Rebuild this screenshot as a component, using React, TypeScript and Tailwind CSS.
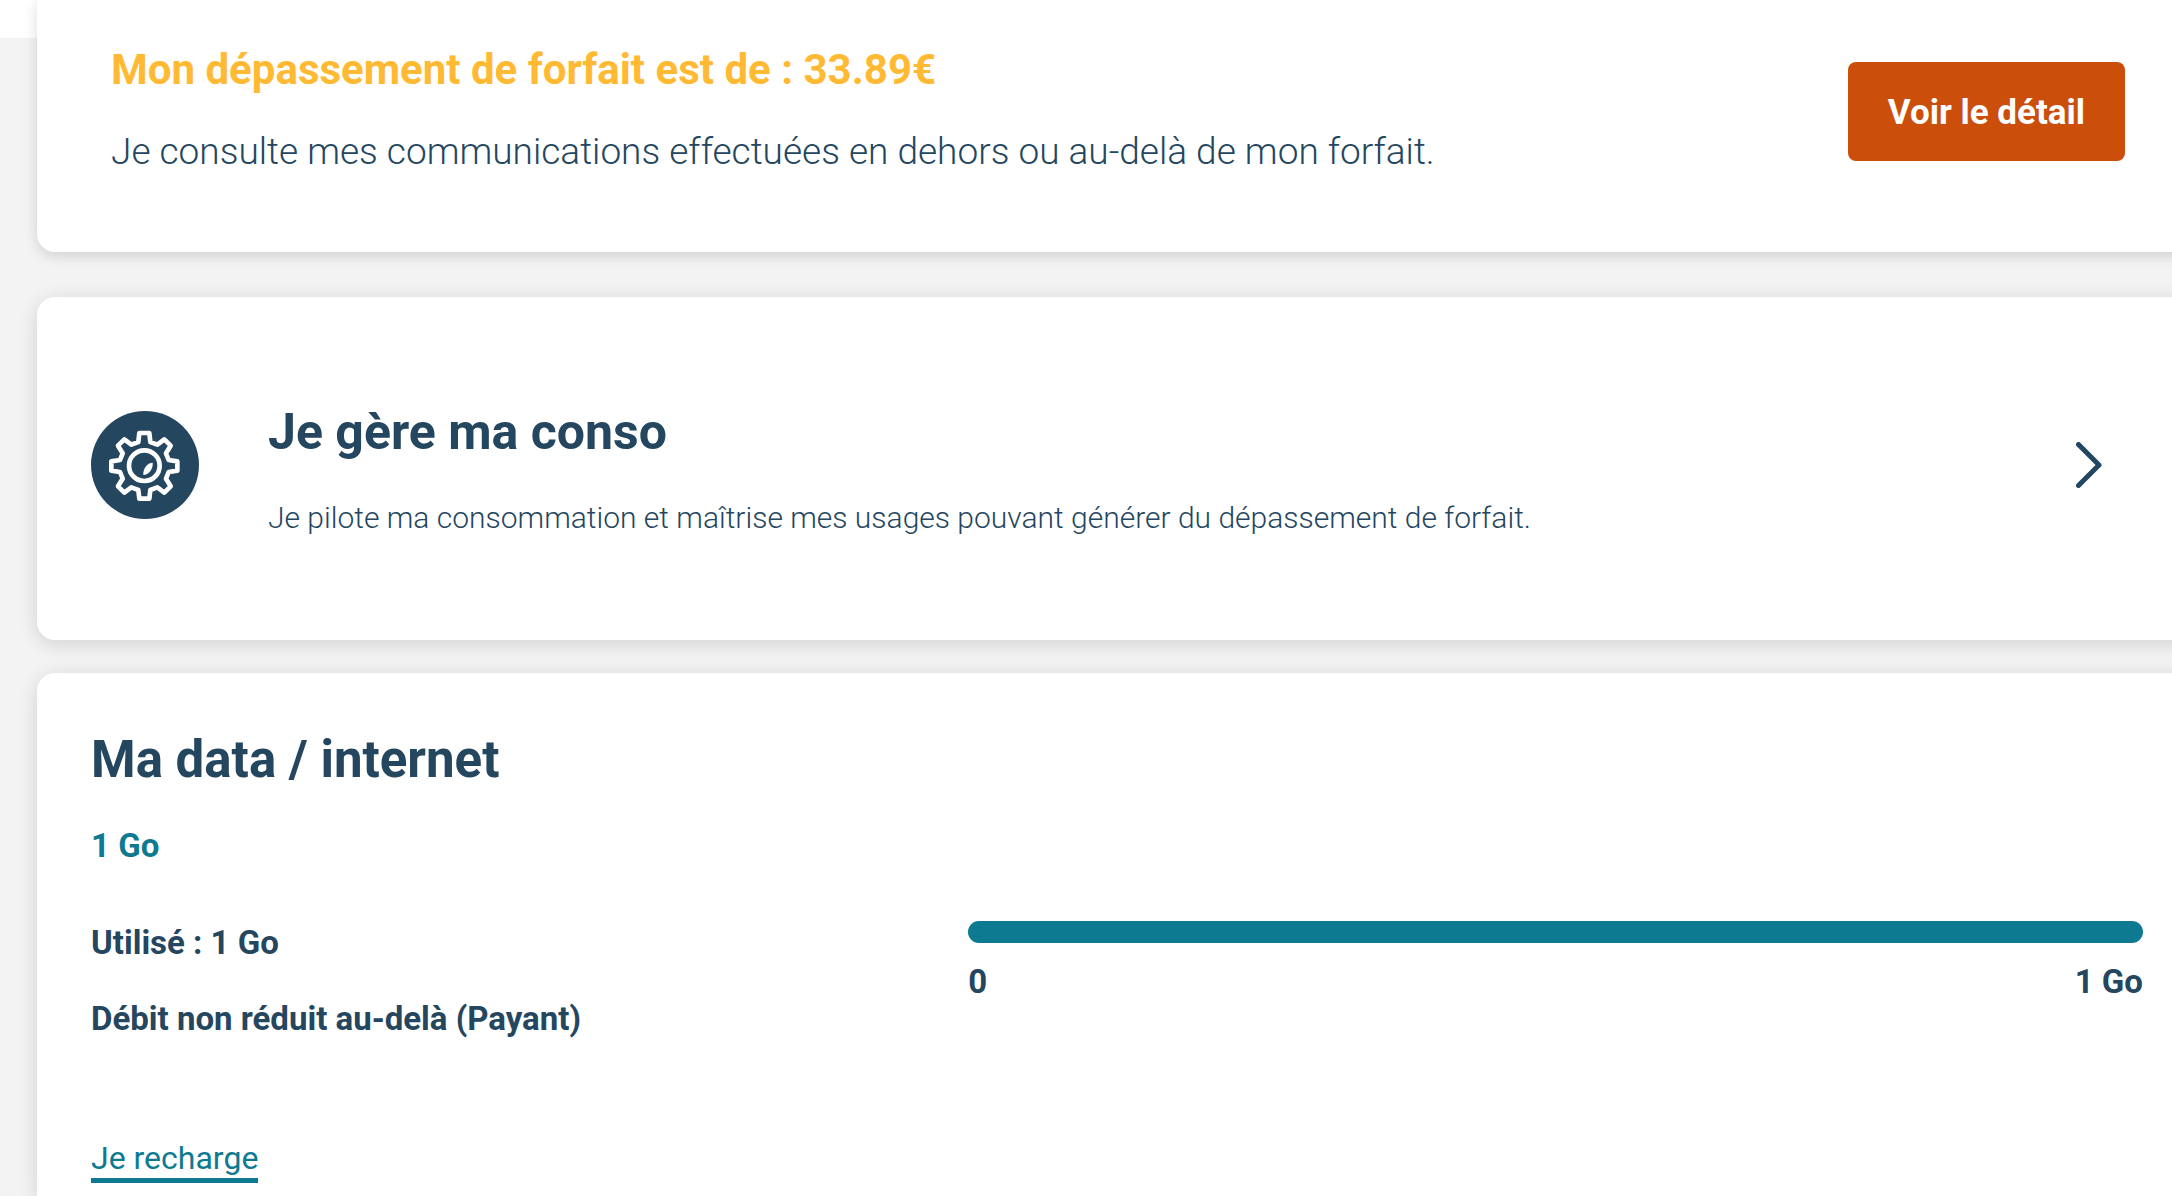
import React from 'react';

interface CardProps {
  className?: string;
  children: React.ReactNode;
}

const Card: React.FC<CardProps> = ({ className = '', children }) => (
  <section className={`bg-white ${className}`}>{children}</section>
);

const GearIcon = () => (
  <svg viewBox="0 0 324 324" className="w-[108px] h-[108px] shrink-0" fill="none" aria-hidden="true">
    <circle cx="162" cy="162" r="162" fill="#25465f" />
    <g transform="translate(-63 -63)" stroke="#fff" strokeWidth="14" strokeLinejoin="round">
      <path d="M208 129H238L241 156L262 164L283 148L302 167L288 190L296 210L322 214V242L296 246L288 266L302 289L283 308L262 292L241 300L238 326H208L205 300L184 292L163 308L144 289L158 266L150 246L124 242V214L150 210L158 190L144 167L163 148L184 164L205 156Z" />
      <circle cx="223" cy="227" r="46" />
      <path d="M248 218C232 218 218 236 220 255C236 255 250 236 248 218Z" fill="#fff" stroke="none" />
    </g>
  </svg>
);

const ChevronIcon = () => (
  <svg viewBox="0 0 26 46" className="w-[26px] h-[46px]" fill="none" aria-hidden="true">
    <path d="M2.5 2.5L23 23L2.5 43.5" stroke="#25465f" strokeWidth="5" strokeLinecap="round" strokeLinejoin="round" />
  </svg>
);

const OverageCard = () => (
  <Card className="flex items-start justify-between pt-11 pb-[74px] pl-[74px] pr-[71px] rounded-bl-[18px] shadow-[0_4px_14px_rgba(0,0,0,0.14)]">
    <div>
      <h2 className="text-[42px] leading-[52px] font-bold text-[#ffb932]">
        Mon dépassement de forfait est de : 33.89€
      </h2>
      <p className="mt-[30px] text-[37px] leading-[52px] font-light">
        Je consulte mes communications effectuées en dehors ou au-delà de mon forfait.
      </p>
    </div>
    <button className="mt-[18px] h-[99px] px-10 pt-0.5 rounded-lg bg-[#cc4e0b] text-white text-[35px] leading-[44px] font-bold">
      Voir le détail
    </button>
  </Card>
);

const ManageCard = () => (
  <Card className="mt-[45px] flex items-center h-[343px] pb-[7px] pl-[54px] pr-[94px] rounded-l-[18px] shadow-[0_4px_20px_rgba(0,0,0,0.14)]">
    <GearIcon />
    <div className="flex-1 ml-[69px] pt-3">
      <h2 className="text-[50px] leading-[60px] font-bold">Je gère ma conso</h2>
      <p className="mt-[34px] text-[30px] leading-[44px] font-light">
        Je pilote ma consommation et maîtrise mes usages pouvant générer du dépassement de forfait.
      </p>
    </div>
    <a href="#conso" aria-label="Je gère ma conso">
      <ChevronIcon />
    </a>
  </Card>
);

const DataCard = () => (
  <Card className="mt-[33px] flex-1 pt-[57px] pl-[54px] pr-[53px] rounded-tl-[18px] shadow-[0_4px_20px_rgba(0,0,0,0.14)]">
    <h2 className="text-[51px] leading-[60px] font-bold">Ma data / internet</h2>
    <p className="mt-[34px] text-[33px] leading-[44px] font-bold text-[#0d7a91]">1 Go</p>
    <div className="mt-[53px] grid grid-cols-[5fr_7fr] gap-x-[38px] text-[33px] leading-[44px] font-bold">
      <div>
        <p>Utilisé : 1 Go</p>
        <p className="mt-8">Débit non réduit au-delà (Payant)</p>
      </div>
      <div>
        <div className="h-[22px] rounded-full bg-[#0d7a91]" />
        <div className="mt-[17px] flex justify-between">
          <span>0</span>
          <span>1 Go</span>
        </div>
      </div>
    </div>
    <a
      href="#recharge"
      className="mt-[97px] inline-block border-b-[5px] border-[#0d7a91] text-[32px] leading-[40px] text-[#0d7a91]"
    >
      Je recharge
    </a>
  </Card>
);

export default function App() {
  return (
    <div className="min-h-screen flex flex-col overflow-hidden bg-[#f3f3f3] font-[Roboto,sans-serif] text-[#25465f]">
      <div className="h-[38px] bg-white" />
      {/* cards run past the right edge of the window */}
      <main className="relative -mt-[38px] -mr-6 pl-[37px] flex-1 flex flex-col">
        <OverageCard />
        <ManageCard />
        <DataCard />
      </main>
    </div>
  );
}
